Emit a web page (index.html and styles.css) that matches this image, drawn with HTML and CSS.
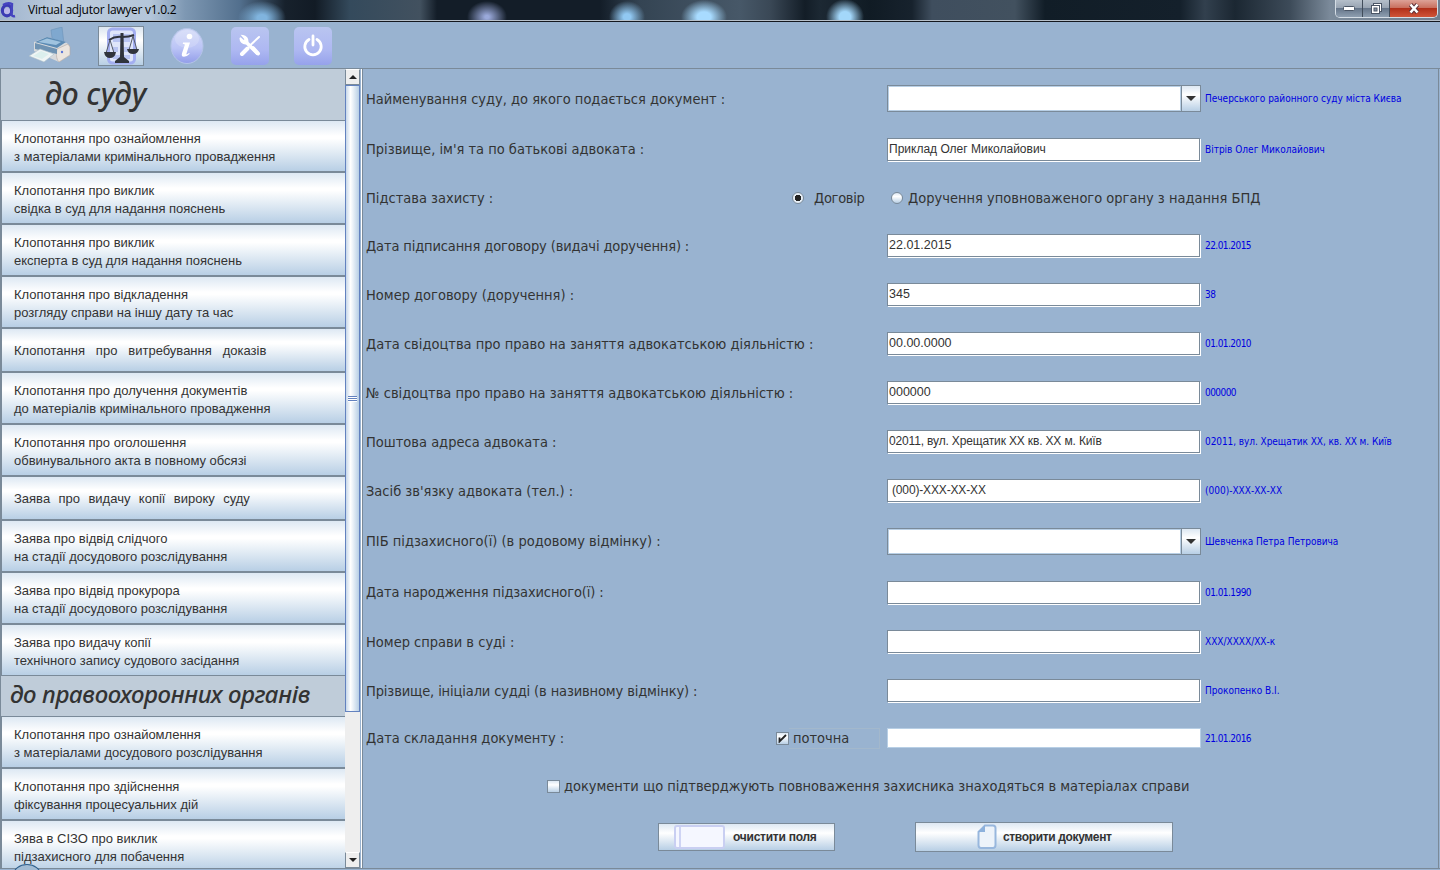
FILE: index.html
```html
<!DOCTYPE html>
<html lang="uk">

<head>
    <meta charset="UTF-8">
    <title>Virtual adjutor lawyer v1.0.2</title>
    <link rel="stylesheet" href="styles.css">
</head>

<body>
    <div class="window">
        <!-- Title bar -->
        <div class="title-bar">
            <svg class="app-logo" width="16" height="18" viewBox="0 0 16 18" fill="none">
                <ellipse cx="7" cy="9.5" rx="4.6" ry="5.4" stroke="#3b3bb4" stroke-width="3.2" />
                <path d="M3 4 Q8 1 12 3 L11.5 13 Q12 16 15 15" stroke="#4444c0" stroke-width="2.4" />
                <circle cx="7" cy="10" r="3" fill="#b9b6ea" />
            </svg>
            <span class="title">Virtual adjutor lawyer v1.0.2</span>
            <div class="window-controls">
                <span class="control"><svg width="12" height="6" viewBox="0 0 12 6"><rect x=".5" y=".5" width="11" height="4" rx="1" fill="#fff" stroke="#4b5666" /></svg></span>
                <span class="control"><svg width="13" height="12" viewBox="0 0 13 12"><rect x="3.5" y=".5" width="8" height="8" fill="#fff" stroke="#4b5666" /><rect x="1.5" y="2.5" width="8" height="8" fill="#fff" stroke="#4b5666" /><rect x="4" y="5" width="3" height="3" fill="#8794a5" stroke="#4b5666" /></svg></span>
                <span class="control close"><svg width="12" height="11" viewBox="0 0 12 11"><path d="M2.5 1.5l7 8M9.5 1.5l-7 8" stroke="#5a3038" stroke-width="4.4" /><path d="M2.5 1.5l7 8M9.5 1.5l-7 8" stroke="#fff" stroke-width="2.6" /></svg></span>
            </div>
        </div>

        <!-- Toolbar -->
        <div class="toolbar">
            <button class="tool printer">
                <svg width="42" height="38" viewBox="0 0 42 38">
                    <path d="M22 3l11-3 2 17-11 1z" fill="#7fa8cf" stroke="#6d93b8" stroke-width=".6" />
                    <path d="M5 15l13-5 20 6 3 4v8l-11 7-25-11z" fill="#d8dadc" />
                    <path d="M6 15l12-5 19 5-9 6z" fill="#5c8bb4" />
                    <path d="M9 15l9-3.5 14 3.5-5 3z" fill="#9fc3df" />
                    <path d="M28 22l11-5 2 3v8l-11 7c-3-3-3-9-2-13z" fill="#ebe5df" stroke="#b5aaa3" stroke-width=".6" />
                    <path d="M6 16l22 6v5L6 22z" fill="#6f93b3" />
                    <path d="M0 29l11-7 14 5-10 8z" fill="#f0f5f5" stroke="#a9bdc8" stroke-width=".6" />
                    <path d="M4 29l8-5 8 3-7 5z" fill="#dcefed" />
                    <circle cx="33" cy="25" r="1.2" fill="#5b76d8" />
                </svg>
            </button>
            <button class="tool scales">
                <svg width="38" height="38" viewBox="0 0 38 38">
                    <rect x="6.5" y="2" width="26" height="34" rx="4" fill="#dfe6fa" stroke="#a3aef0" stroke-width="3" />
                    <path d="M11 7h17v8H11zM11 20h5v5h-5zM22 20h6v5h-6zM11 28h17v4H11z" fill="#b9c5f2" />
                    <path d="M18.5 6h3l.5 24 5 4v2H13v-2l5-4z" fill="#30343c" />
                    <path d="M7 13q6-4 13-3 7 0 12-2" stroke="#30343c" stroke-width="2" fill="none" />
                    <path d="M8 13L4 26M8 13l4 13M31 9l-4 14M31 9l4 14" stroke="#555b66" />
                    <path d="M2 25h12q-1 6-6 6t-6-6zM25 22h12q-1 5-6 5t-6-5z" fill="#30343c" />
                </svg>
            </button>
            <button class="tool info">
                <svg width="34" height="36" viewBox="0 0 34 36">
                    <defs>
                        <linearGradient id="ball" x1="0" y1="0" x2="0" y2="1"><stop offset="0" stop-color="#d3daf8" /><stop offset=".55" stop-color="#bcc5f6" /><stop offset="1" stop-color="#929de9" /></linearGradient>
                    </defs>
                    <ellipse cx="17" cy="18" rx="16" ry="17.5" fill="url(#ball)" stroke="#b4c4e7" />
                    <ellipse cx="17" cy="11" rx="12" ry="9" fill="#fff" opacity=".18" />
                    <circle cx="19.5" cy="8.5" r="2.8" fill="#fff" />
                    <path d="M13 14.5h7l-3.5 11q-.5 2 2.5-.5l.8.8q-3 3-5.800 3-3 0-2-3.500l2.800-8.300q.3-1.200-2-1z" fill="#fff" />
                </svg>
            </button>
            <button class="tool tile">
                <svg width="24" height="24" viewBox="0 0 24 24" fill="none" stroke="#fff" stroke-linecap="round">
                    <path d="M7 7l12 12" stroke-width="3.6" />
                    <path d="M2.5 4.5l4 3.5 2-2-3.5-4A5 5 0 0 1 9.5 7.5 M2.5 4.5A5 5 0 0 0 7.5 9.5" stroke-width="2" />
                    <path d="M21 3l-8.5 8" stroke-width="2" />
                    <path d="M4 20l5.5-5.5M15 14l5 5.5" stroke-width="4" />
                </svg>
            </button>
            <button class="tool tile">
                <svg width="22" height="24" viewBox="0 0 22 24" fill="none" stroke="#fff" stroke-width="2.8" stroke-linecap="round">
                    <path d="M7 5.5a8.2 8.2 0 1 0 8 0M11 2v9" />
                </svg>
            </button>
        </div>

        <div class="content">
            <!-- Sidebar -->
            <div class="sidebar">
                <div class="list">
                    <h2 class="court">до суду</h2>
                    <button>Клопотання про ознайомлення<br>з матеріалами кримінального провадження</button>
                    <button>Клопотання про виклик<br>свідка в суд для надання пояснень</button>
                    <button>Клопотання про виклик<br>експерта в суд для надання пояснень</button>
                    <button>Клопотання про відкладення<br>розгляду справи на іншу дату та час</button>
                    <button class="single wide">Клопотання про витребування доказів</button>
                    <button>Клопотання про долучення документів<br>до матеріалів кримінального провадження</button>
                    <button>Клопотання про оголошення<br>обвинувального акта в повному обсязі</button>
                    <button class="single">Заява про видачу копії вироку суду</button>
                    <button>Заява про відвід слідчого<br>на стадії досудового розслідування</button>
                    <button>Заява про відвід прокурора<br>на стадії досудового розслідування</button>
                    <button>Заява про видачу копії<br>технічного запису судового засідання</button>
                    <h2 class="police">до правоохоронних органів</h2>
                    <button>Клопотання про ознайомлення<br>з матеріалами досудового розслідування</button>
                    <button>Клопотання про здійснення<br>фіксування процесуальних дій</button>
                    <button>Зява в СІЗО про виклик<br>підзахисного для побачення</button>
                </div>
                <div class="scrollbar">
                    <span class="arrow up"></span>
                    <span class="thumb"></span>
                    <span class="track"></span>
                    <span class="arrow down"></span>
                </div>
                <span class="orb"></span>
            </div>

            <!-- Document form -->
            <form class="form">
                <div class="row r51">
                    <label>Найменування суду, до якого подається документ :</label>
                    <div class="combo"><span></span><i></i></div>
                    <span class="hint">Печерського районного суду міста Києва</span>
                </div>
                <div class="row r50">
                    <label>Прізвище, ім'я та по батькові адвоката :</label>
                    <div class="field">Приклад Олег Миколайович</div>
                    <span class="hint">Вітрів Олег Миколайович</span>
                </div>
                <div class="row r47">
                    <label>Підстава захисту :</label>
                    <div class="option contract"><span class="radio checked"></span>Договір</div>
                    <div class="option order"><span class="radio"></span>Доручення уповноваженого органу з надання БПД</div>
                </div>
                <div class="row">
                    <label class="tight">Дата підписання договору (видачі доручення) :</label>
                    <div class="field digits">22.01.2015</div>
                    <span class="hint number">22.01.2015</span>
                </div>
                <div class="row">
                    <label>Номер договору (доручення) :</label>
                    <div class="field digits">345</div>
                    <span class="hint number">38</span>
                </div>
                <div class="row">
                    <label>Дата свідоцтва про право на заняття адвокатською діяльністю :</label>
                    <div class="field digits">00.00.0000</div>
                    <span class="hint number">01.01.2010</span>
                </div>
                <div class="row">
                    <label>№ свідоцтва про право на заняття адвокатською діяльністю :</label>
                    <div class="field digits">000000</div>
                    <span class="hint number">000000</span>
                </div>
                <div class="row">
                    <label>Поштова адреса адвоката :</label>
                    <div class="field address">02011, вул. Хрещатик ХХ кв. ХХ м. Київ</div>
                    <span class="hint long">02011, вул. Хрещатик ХХ, кв. ХХ м. Київ</span>
                </div>
                <div class="row">
                    <label>Засіб зв'язку адвоката (тел.) :</label>
                    <div class="field phone">(000)-ХХХ-ХХ-ХХ</div>
                    <span class="hint">(000)-ХХХ-ХХ-ХХ</span>
                </div>
                <div class="row r52">
                    <label>ПІБ підзахисного(ї) (в родовому відмінку) :</label>
                    <div class="combo"><span></span><i></i></div>
                    <span class="hint">Шевченка Петра Петровича</span>
                </div>
                <div class="row r50">
                    <label class="tight">Дата народження підзахисного(ї) :</label>
                    <div class="field"></div>
                    <span class="hint number">01.01.1990</span>
                </div>
                <div class="row">
                    <label>Номер справи в суді :</label>
                    <div class="field"></div>
                    <span class="hint">ХХХ/ХХХХ/ХХ-к</span>
                </div>
                <div class="row">
                    <label class="tight">Прізвище, ініціали судді (в називному відмінку) :</label>
                    <div class="field"></div>
                    <span class="hint">Прокопенко В.І.</span>
                </div>
                <div class="row r46">
                    <label>Дата складання документу :</label>
                    <div class="option current"><span class="check"><svg width="9" height="9" viewBox="0 0 9 9" fill="none"><path d="M1.5 3.5v4L8 1" stroke="#222" stroke-width="1.8" /></svg></span><span class="focus">поточна</span></div>
                    <div class="field disabled"></div>
                    <span class="hint number">21.01.2016</span>
                </div>
                <div class="option proof"><span class="check"></span>документи що підтверджують повноваження захисника знаходяться в матеріалах справи</div>
                <div class="actions">
                    <button type="button" class="clear"><span class="blank"></span>очистити поля</button>
                    <button type="button" class="create">
                        <svg width="20" height="26" viewBox="0 0 20 26"><path d="M8 1.5h8q2.5 0 2.5 2.5v17q0 3-2.5 3H4q-2.5 0-2.5-3V8z" fill="#edf3fa" stroke="#98b7dd" stroke-width="2" /><path d="M8 1v7H1z" fill="#8db1dc" /></svg>
                        створити документ
                    </button>
                </div>
            </form>
        </div>
    </div>
</body>

</html>
```

FILE: styles.css
```css
* {
    margin: 0;
    padding: 0;
    box-sizing: border-box;
}

body {
    font-family: "Liberation Sans", Arial, sans-serif;
    background-color: #99b3d0;
    color: #333;
    overflow: hidden;
}

button {
    font-family: inherit;
    color: inherit;
}

.window {
    width: 1440px;
    height: 870px;
    display: flex;
    flex-direction: column;
}

/* Title bar */
.title-bar {
    height: 22px;
    display: flex;
    align-items: flex-start;
    border-bottom: 1px solid #14181f;
    box-shadow: inset 0 -1px #b7c0ca;
    background:
        radial-gradient(ellipse 24px 17px at 262px 18px, #80b4de 20%, transparent),
        radial-gradient(ellipse 20px 16px at 487px 17px, #9aa9da 10%, transparent),
        radial-gradient(ellipse 18px 16px at 627px 17px, #91c8f2 20%, transparent),
        radial-gradient(ellipse 23px 17px at 704px 17px, #a8dbff 30%, transparent),
        radial-gradient(ellipse 19px 18px at 845px 17px, #a3d7fa 30%, transparent),
        linear-gradient(90deg, #9fb4cd 0, #bccbdd 60px, #b4c6da 150px, #7e98b3 185px, #526f8d 240px, #17212c 285px, #121b25 315px, #344a5c 350px, #42515f 420px, #131d28 437px, #131d28 600px, #344453 640px, #475868 740px, #3a4856 770px, #131d27 805px, #1c2833 820px, #101b24 870px, #17222d 912px, #3f4e5e 932px, #42515f 1015px, #111d27 1045px, #14202b 1180px, #32404e 1205px, #1b2732 1235px, #3d4b59 1290px, #7b8a9a 1330px, #6e7e90 1440px);
}

.app-logo {
    margin: 1px 12px 0 0;
}

.title {
    font: 12px/20px "Open Sans", "Noto Sans", sans-serif;
    letter-spacing: -.27px;
    color: #000;
}

.window-controls {
    margin-left: auto;
    margin-right: 2px;
    display: flex;
    height: 18px;
    border: 1px solid #d5dde5;
    border-top: 0;
    border-radius: 0 0 5px 5px;
    overflow: hidden;
}

.control {
    width: 27px;
    display: flex;
    align-items: center;
    justify-content: center;
    background: linear-gradient(#b5bfca 0, #99a5b3 45%, #66768a 50%, #8e9eb0);
    border-right: 1px solid #414d5b;
}

.close {
    width: 47px;
    border-right: 0;
    background: linear-gradient(#dda297 0, #c9705f 45%, #b1301a 50%, #cf5438);
}

/* Toolbar */
.toolbar {
    height: 47px;
    display: flex;
    align-items: center;
    padding-left: 29px;
}

.tool {
    width: 38px;
    height: 38px;
    background: none;
    border: 0;
    display: flex;
    align-items: center;
    justify-content: center;
}

.printer {
    width: 42px;
}

.scales {
    width: 46px;
    height: 40px;
    margin-left: 27px;
    border: 1px solid #7a8a99;
    background: linear-gradient(#dbe5f0, #fff 35%, #b8cfe5);
}

.info {
    margin: 0 25px 0 24px;
}

.tile {
    margin-right: 25px;
    border-radius: 5px;
    background: linear-gradient(#b9c5f0, #aeb8f2 60%, #96a2eb);
}

/* Content */
.content {
    height: 801px;
    display: flex;
    border-top: 1px solid #7a8a99;
    border-bottom: 1px solid #7a8a99;
    margin-top: -1px;
}

.sidebar {
    position: relative;
    width: 362px;
    display: flex;
    border-left: 1px solid #7a8a99;
    border-right: 1px solid #fff;
}

.list {
    width: 344px;
    overflow: hidden;
}

.list h2 {
    font: italic 500 30px/50px "Noto Sans", "Open Sans", sans-serif;
    background: #bfccd9;
    white-space: nowrap;
}

.court {
    height: 51px;
    padding-left: 44px;
}

.list .police {
    height: 40px;
    padding-left: 9px;
    font-size: 24px;
    line-height: 36px;
    letter-spacing: -.38px;
}

.list button {
    display: block;
    width: 345px;
    height: 52px;
    padding: 3px 0 0 12px;
    border: 1px solid #7a8a99;
    background: linear-gradient(#dde8f3, #fff 30%, #fff 35%, #b8cfe5);
    font-size: 13px;
    line-height: 18px;
    text-align: left;
    white-space: nowrap;
}

.list .single {
    height: 44px;
    padding-top: 1px;
    word-spacing: 4.8px;
}

.list .wide {
    word-spacing: 7.3px;
}

/* Scrollbar */
.scrollbar {
    width: 15px;
    display: flex;
    flex-direction: column;
    background: #eee;
}

.arrow {
    height: 16px;
    display: flex;
    align-items: center;
    justify-content: center;
    border: 1px solid #7a8a99;
    border-top-color: #fff;
}

.arrow::after {
    content: "";
    border: 4px solid transparent;
}

.up::after {
    border-top: 0;
    border-bottom-color: #222;
}

.down::after {
    border-bottom: 0;
    border-top-color: #222;
}

.thumb {
    height: 627px;
    border: 1px solid #6382bf;
    background:
        repeating-linear-gradient(#6382bf 0 1px, #fff 1px 2px) 50% 50% / 9px 6px no-repeat,
        linear-gradient(90deg, #c8d8ea, #fff 35%, #b8cfe5);
}

.track {
    flex: 1;
}

.orb {
    position: absolute;
    left: 12px;
    bottom: -18px;
    width: 28px;
    height: 22px;
    border: 1px solid #2d5f8d;
    border-radius: 50%;
    background: #a2bcd4;
}

/* Form */
.form {
    flex: 1;
    margin-right: 1px;
    padding: 4px 0 0 3px;
    border-left: 1px solid #7a8a99;
    border-right: 1px solid #7a8a99;
    font: 14.5px "DejaVu Sans Condensed", "DejaVu Sans", sans-serif;
    font-stretch: condensed;
}

.row {
    height: 49px;
    display: grid;
    grid-template-columns: 411px 110px 314px 1fr;
    align-items: center;
    white-space: nowrap;
}

.r46 { height: 46px; }
.r47 { height: 47px; }
.r50 { height: 50px; }
.r51 { height: 51px; }
.r52 { height: 52px; }

.row label {
    grid-column: 1;
}

.row .tight {
    letter-spacing: -.13px;
}

.field,
.combo {
    grid-column: 3;
    height: 23px;
    background: #fff;
}

.field {
    width: 313px;
    padding-left: 1px;
    border: 1px solid #7a8a99;
    box-shadow: inset -1px -1px #fff, 1px 1px #fff;
    font: 12px/21px "Liberation Sans", Arial, sans-serif;
}

.digits {
    font-size: 12.5px;
}

.address,
.phone {
    letter-spacing: -.15px;
}

.phone {
    padding-left: 4px;
}

.disabled {
    width: 314px;
    height: 20px;
    border-color: #b8cfe5;
    box-shadow: none;
}

.combo {
    height: 27px;
    display: flex;
    border: 1px solid #7a8a99;
}

.combo span {
    flex: 1;
    border: 1px solid #b8cfe5;
}

.combo i {
    width: 19px;
    display: flex;
    align-items: center;
    justify-content: center;
    border-left: 1px solid #7a8a99;
    background: linear-gradient(#dde8f3, #fff 35%, #b8cfe5);
}

.combo i::after {
    content: "";
    border: 5px solid transparent;
    border-top-color: #333;
    border-bottom: 0;
}

.hint {
    grid-column: 4;
    padding-left: 4px;
    font-size: 10px;
    color: #0000e0;
}

.long {
    letter-spacing: -.07px;
}

.number {
    letter-spacing: -.55px;
}

.option {
    display: flex;
    align-items: center;
    white-space: nowrap;
}

.contract {
    grid-column: 2;
    padding-left: 15px;
    gap: 10px;
    letter-spacing: -.3px;
}

.order {
    grid-column: 3 / 5;
    padding-left: 4px;
    gap: 5px;
}

.radio {
    width: 12px;
    height: 12px;
    border: 1px solid #7a8a99;
    border-radius: 50%;
    background: linear-gradient(#dde8f3, #fff 35%, #b8cfe5);
}

.checked {
    background: radial-gradient(circle, #222 3px, #e7eff7 3.5px);
}

.check {
    width: 13px;
    height: 13px;
    display: flex;
    align-items: center;
    justify-content: center;
    border: 1px solid #7a8a99;
    background: linear-gradient(#dde8f3, #fff 35%, #b8cfe5);
}

.current {
    grid-column: 2;
    margin-left: -1px;
}

.focus {
    width: 91px;
    height: 21px;
    padding-left: 4px;
    line-height: 19px;
    border: 1px solid #a3b8cc;
    border-left: 0;
}

.proof {
    height: 50px;
    padding-left: 181px;
    gap: 4px;
    letter-spacing: -.03px;
}

.actions {
    height: 51px;
    display: flex;
    align-items: center;
    padding-left: 292px;
    gap: 80px;
}

.actions button {
    display: flex;
    align-items: center;
    height: 28px;
    border: 1px solid #7a8a99;
    background: linear-gradient(#dde8f3, #fff 35%, #b8cfe5);
    font: bold 12px "Liberation Sans", Arial, sans-serif;
    letter-spacing: -.25px;
    white-space: nowrap;
}

.actions .clear {
    width: 177px;
    padding-left: 15px;
    gap: 8px;
}

.actions .create {
    width: 258px;
    height: 30px;
    padding-left: 61px;
    gap: 6px;
    letter-spacing: -.35px;
}

.blank {
    width: 51px;
    height: 24px;
    border: 2px solid #c9cff2;
    border-radius: 3px;
    background: linear-gradient(90deg, #f5f7ff 3px, #cfd4f4 3px 5px, #f5f7ff 5px);
}
```
